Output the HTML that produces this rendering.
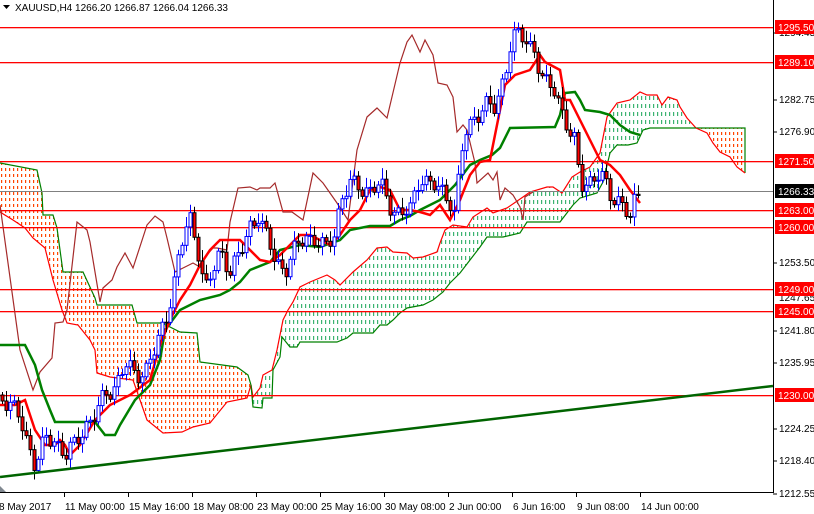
<!DOCTYPE html>
<html><head><meta charset="utf-8"><style>
html,body{margin:0;padding:0;background:#fff;}
svg{display:block;font-family:"Liberation Sans",Tahoma,sans-serif;font-size:10px;}
</style></head><body>
<svg id="c" width="814" height="514" xmlns="http://www.w3.org/2000/svg">
<defs id="defs"></defs>
<rect width="814" height="514" fill="#fff"/>
<g id="clouds"></g>
<g id="hl"></g>
<line x1="0" y1="191.5" x2="773" y2="191.5" stroke="#808080"/>
<g id="lines"></g>
<g id="candles"></g>
<line x1="0" y1="477" x2="773" y2="386" stroke="#006400" stroke-width="2.5"/>
<rect x="774" y="0" width="40" height="514" fill="#fff"/>
<rect x="0" y="493" width="814" height="21" fill="#fff"/>
<line x1="773.5" y1="0" x2="773.5" y2="492" stroke="#000"/>
<line x1="0" y1="492.5" x2="774" y2="492.5" stroke="#000"/>
<polygon points="0,486 6,492 0,492" fill="#808890"/>
<g fill="#000">
<text x="779" y="36">1294.45</text>
<text x="779" y="103">1282.75</text>
<text x="779" y="135">1276.90</text>
<text x="779" y="266">1253.50</text>
<text x="779" y="301">1247.65</text>
<text x="779" y="334">1241.80</text>
<text x="779" y="366">1235.95</text>
<text x="779" y="432">1224.25</text>
<text x="779" y="464">1218.40</text>
<text x="779" y="497">1212.55</text>
</g>
<g stroke="#000"><line x1="773" y1="33" x2="777" y2="33"/><line x1="773" y1="100" x2="777" y2="100"/><line x1="773" y1="132" x2="777" y2="132"/><line x1="773" y1="263" x2="777" y2="263"/><line x1="773" y1="331" x2="777" y2="331"/><line x1="773" y1="363" x2="777" y2="363"/><line x1="773" y1="429" x2="777" y2="429"/><line x1="773" y1="461" x2="777" y2="461"/><line x1="773" y1="494" x2="777" y2="494"/></g>
<g stroke="#000"><line x1="64.5" y1="492" x2="64.5" y2="497"/><line x1="128.5" y1="492" x2="128.5" y2="497"/><line x1="192.5" y1="492" x2="192.5" y2="497"/><line x1="256.5" y1="492" x2="256.5" y2="497"/><line x1="320.5" y1="492" x2="320.5" y2="497"/><line x1="384.5" y1="492" x2="384.5" y2="497"/><line x1="448.5" y1="492" x2="448.5" y2="497"/><line x1="512.5" y1="492" x2="512.5" y2="497"/><line x1="576.5" y1="492" x2="576.5" y2="497"/><line x1="640.5" y1="492" x2="640.5" y2="497"/></g>
<g fill="#000">
<text x="-1" y="510">8 May 2017</text>
<text x="65" y="510">11 May 00:00</text>
<text x="129" y="510">15 May 16:00</text>
<text x="193" y="510">18 May 08:00</text>
<text x="257" y="510">23 May 00:00</text>
<text x="321" y="510">25 May 16:00</text>
<text x="385" y="510">30 May 08:00</text>
<text x="449" y="510">2 Jun 00:00</text>
<text x="513" y="510">6 Jun 16:00</text>
<text x="577" y="510">9 Jun 08:00</text>
<text x="641" y="510">14 Jun 00:00</text>
</g>
<polygon points="3,5 10,5 6.5,9" fill="#000"/>
<text x="15" y="11" fill="#000">XAUUSD,H4  1266.20 1266.87 1266.04 1266.33</text>
<g>
<rect x="775" y="20" width="39" height="14" fill="#f00"/><text x="778" y="31" fill="#fff">1295.50</text>
<rect x="775" y="55" width="39" height="14" fill="#f00"/><text x="778" y="66" fill="#fff">1289.10</text>
<rect x="775" y="154" width="39" height="14" fill="#f00"/><text x="778" y="165" fill="#fff">1271.50</text>
<rect x="775" y="184" width="39" height="14" fill="#000"/><text x="778" y="195" fill="#fff">1266.33</text>
<rect x="775" y="203" width="39" height="14" fill="#f00"/><text x="778" y="214" fill="#fff">1263.00</text>
<rect x="775" y="220" width="39" height="14" fill="#f00"/><text x="778" y="231" fill="#fff">1260.00</text>
<rect x="775" y="282" width="39" height="14" fill="#f00"/><text x="778" y="293" fill="#fff">1249.00</text>
<rect x="775" y="304" width="39" height="14" fill="#f00"/><text x="778" y="315" fill="#fff">1245.00</text>
<rect x="775" y="388" width="39" height="14" fill="#f00"/><text x="778" y="399" fill="#fff">1230.00</text>
</g>
</svg>
<script>
(function(){
var NS="http://www.w3.org/2000/svg";
function el(p,t,a){var e=document.createElementNS(NS,t);for(var k in a)e.setAttribute(k,a[k]);(typeof p=="string"?document.getElementById(p):p).appendChild(e);return e;}
function pts(a){var s=[];for(var i=0;i<a.length;i+=2)s.push(a[i]+","+a[i+1]);return s.join(" ");}
function rev(a){var r=[];for(var i=a.length-2;i>=0;i-=2){r.push(a[i],a[i+1]);}return r;}
[27,62,161,210,227,289,311,395].forEach(function(y){el("hl","rect",{x:0,y:y,width:773,height:1.3,fill:"#ff0000"});});
var cid=0;
function cloud(T,B,col,up,dash,gap){
 var poly=T.concat(rev(B));
 var id="cl"+(cid++);
 var cp=el("defs","clipPath",{id:id});
 el(cp,"polygon",{points:pts(poly)});
 var g=el("clouds","g",{"clip-path":"url(#"+id+")"});
 var minx=1e9,maxx=-1e9;for(var i=0;i<poly.length;i+=2){minx=Math.min(minx,poly[i]);maxx=Math.max(maxx,poly[i]);}
 for(var x=Math.floor(minx/4)*4+1;x<=maxx;x+=4){for(var y=0;y<492;y+=dash+gap){el(g,"rect",{x:x,y:y,width:1.2,height:dash,fill:col});}}
 el("clouds","polyline",{points:pts(T),fill:"none",stroke:up,"stroke-width":1.2});
}
var oT=[0,163,37,170,42,193,43,215,53,215,57,228,60,250,63,272,83,272,95,298,97,305,132,305,137,323,162,323,180,332,197,333,200,362,237,367,248,375,251,385];
var oB=[0,212,13,220,25,228,33,238,45,248,53,280,62,310,67,323,78,325,90,340,95,350,97,373,110,377,133,380,147,420,163,433,182,432,193,427,210,423,227,402,247,398,251,385];
cloud(oT,oB,"#ff4500","#008000",3,3);
el("clouds","polyline",{points:pts(oB),fill:"none",stroke:"#ff0000","stroke-width":1.2});
var gT=[251,385,253,397,260,388,263,375,272,370,277,350,283,320,288,310,293,302,300,287,310,282,327,275,335,280,340,285,353,272,367,260,377,248,387,247,393,252,407,253,413,258,423,257,437,252,440,243,445,230,453,225,467,227,473,217,487,208,493,213,507,208,523,197,530,192,547,187,553,187,562,193,572,177,580,172,590,167,600,153,607,117,617,103,630,100,640,92,647,95,657,95,662,105,668,97,677,100,680,107,687,118,696,128];
var gB=[251,385,253,407,262,408,263,398,272,398,273,370,280,357,282,337,290,347,297,347,300,342,337,342,347,338,353,333,373,333,380,325,387,325,393,320,400,313,407,308,423,305,433,300,443,292,450,283,460,273,470,260,480,247,487,237,503,237,520,233,527,222,560,222,573,205,580,198,597,193,603,182,610,153,617,145,628,145,637,143,643,130,650,128,696,128];
cloud(gT,gB,"#3cb371","#ff0000",4,4);
el("clouds","polyline",{points:pts(gB),fill:"none",stroke:"#008000","stroke-width":1.2});
var o2T=[696,128,745,128,745,173];
var o2B=[696,128,707,133,713,143,720,152,730,157,737,167,745,173];
cloud(o2T,o2B,"#ff4500","#008000",3,3);
el("clouds","polyline",{points:pts(o2B),fill:"none",stroke:"#ff0000","stroke-width":1.2});
var ch=[0,205,20,350,33,390,40,372,52,358,55,323,63,322,67,310,77,222,87,230,90,242,100,302,103,288,112,280,117,267,125,253,133,268,147,225,155,216,163,222,167,238,175,272,193,263,200,267,205,257,213,248,217,248,227,250,230,222,238,188,250,187,257,190,260,188,270,188,275,183,283,212,292,212,303,220,313,173,323,183,337,203,348,220,357,150,367,117,377,108,387,118,400,63,407,42,412,35,420,52,425,40,433,55,438,83,447,85,453,97,457,132,463,125,467,130,475,163,477,183,488,173,493,180,497,172,500,200,505,188,513,195,520,207,523,220,525,197,533,192];
el("lines","polyline",{points:pts(ch),fill:"none",stroke:"#a52a2a","stroke-width":1.2});
var kj=[0,345,25,345,35,365,42,390,50,410,55,422,95,422,105,435,115,435,120,425,135,400,150,385,160,360,165,330,180,310,200,300,220,295,230,290,240,282,250,270,270,262,280,250,300,245,320,247,340,240,350,230,370,226,390,226,400,220,410,216,420,210,440,200,455,185,470,165,480,160,492,155,500,148,510,128,555,127,560,115,565,93,575,92,580,100,585,110,600,112,610,115,620,125,630,132,640,135];
el("lines","polyline",{points:pts(kj),fill:"none",stroke:"#008000","stroke-width":2.5});
var tk=[0,405,15,405,25,400,35,430,45,445,55,445,60,440,65,445,70,455,80,445,95,420,110,405,130,395,150,380,160,345,170,320,180,300,190,285,200,265,210,250,220,240,240,240,250,250,260,260,270,262,280,255,290,245,300,235,310,235,330,245,340,235,350,220,360,210,370,190,380,187,390,190,400,210,410,210,420,212,430,215,440,205,450,220,460,200,470,175,480,162,490,160,500,110,505,85,515,75,530,70,540,55,545,62,560,70,565,100,570,100,575,110,580,120,590,140,600,160,610,165,620,175,630,190,640,203];
el("lines","polyline",{points:pts(tk),fill:"none",stroke:"#ff0000","stroke-width":2.5});
var cp=[0,395,10,405,20,420,30,450,35,465,45,440,55,440,65,455,75,445,85,425,95,415,105,395,115,385,125,365,135,375,145,370,155,350,165,320,172,290,178,260,185,230,190,220,198,250,205,290,210,280,220,250,230,270,240,255,250,225,258,215,265,235,275,260,285,270,295,250,305,235,315,240,325,250,335,230,340,200,350,185,360,187,370,190,380,185,390,205,400,215,410,210,420,175,430,185,440,190,450,200,455,215,460,160,465,135,475,115,485,105,495,110,505,70,510,45,515,35,525,40,535,50,540,75,545,85,555,90,560,105,565,120,570,135,575,145,580,185,590,180,600,175,610,195,620,200,630,220,635,200,640,190];
function P(x){for(var i=0;i<cp.length-2;i+=2){if(x<=cp[i+2]){var t=(x-cp[i])/(cp[i+2]-cp[i]);return cp[i+1]+t*(cp[i+3]-cp[i+1]);}}return cp[cp.length-1];}
var prev=P(0);
for(var i=0;i<160;i++){var x=2+4*i;var c=P(x)+Math.sin(i*1.7)*7+Math.cos(i*0.9)*4;var o=prev;prev=c;
var yt=Math.min(o,c),yb=Math.max(o,c);if(yb-yt<1)yb=yt+1;
var hi=yt-(3+(i*7)%9),lo=yb+(3+(i*3)%9);var up=c<o;
el("candles","line",{x1:x+.5,y1:hi,x2:x+.5,y2:lo,stroke:up?"#0000ff":"#000"});
el("candles","rect",{x:x-1,y:yt,width:3,height:yb-yt,fill:up?"#fff":"#ff0000",stroke:up?"#0000ff":"#000","stroke-width":1});}
})();
</script>
</body></html>
